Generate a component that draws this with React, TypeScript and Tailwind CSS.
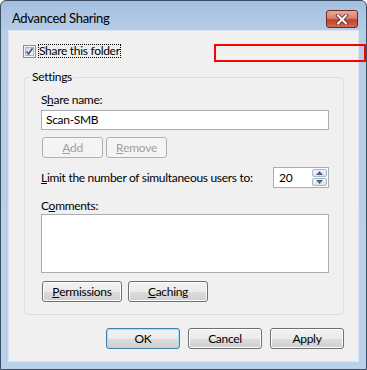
import React from "react";

function WinButton({ children, width, disabled, isDefault }: { children: React.ReactNode; width: string; disabled?: boolean; isDefault?: boolean }) {
  const base = "h-[21px] rounded-[3px] border flex items-center justify-center text-[12px] leading-none";
  if (disabled) {
    return (
      <div className={`${base} ${width} border-[#adb2b5] bg-[#f4f4f4] text-[#a0a0a0]`}>
        {children}
      </div>
    );
  }
  return (
    <div
      className={`${base} ${width} ${isDefault ? "border-[#3c7fb1] shadow-[inset_0_0_0_1px_#a8e0f6]" : "border-[#707070] shadow-[inset_0_0_0_1px_#fcfcfc]"} bg-[linear-gradient(to_bottom,#f2f2f2_0%,#ebebeb_50%,#dddddd_51%,#cfcfcf_100%)] text-black`}
    >
      {children}
    </div>
  );
}

function Checkbox() {
  return (
    <div className="w-[13px] h-[13px] border border-[#8e8f8f] bg-[#f4f4f4] p-[1px] shrink-0">
      <div className="w-full h-full border border-[#b5b5b5] bg-[linear-gradient(135deg,#d6d6d6,#f8f8f8)] relative">
        <svg className="absolute -left-[1px] -top-[1px]" width="9" height="9" viewBox="0 0 9 9">
          <path d="M1.5 4.5 L3.5 7 L7.5 1.2" fill="none" stroke="#4a5f97" strokeWidth="1.7" />
        </svg>
      </div>
    </div>
  );
}

function Spinner() {
  return (
    <div className="w-[56px] h-[21px] border border-[#abadb3] bg-white flex">
      <div className="flex-1 pl-[5px] flex items-center text-[12px]">20</div>
      <div className="w-[16px] flex flex-col gap-[1px] p-[1px] pl-0">
        <div className="flex-1 border border-[#a9b6c4] rounded-[2px] bg-[linear-gradient(to_bottom,#f3f5f8,#dde3ea)] flex items-center justify-center">
          <svg width="7" height="4" viewBox="0 0 7 4"><path d="M0 4 L3.5 0 L7 4 Z" fill="#4d6185" /></svg>
        </div>
        <div className="flex-1 border border-[#a9b6c4] rounded-[2px] bg-[linear-gradient(to_bottom,#f3f5f8,#dde3ea)] flex items-center justify-center">
          <svg width="7" height="4" viewBox="0 0 7 4"><path d="M0 0 L3.5 4 L7 0 Z" fill="#4d6185" /></svg>
        </div>
      </div>
    </div>
  );
}

export default function App() {
  return (
    <div className="relative w-[367px] h-[370px] font-['Lato',sans-serif] text-[12px] tracking-[-0.3px] text-black">
      <div className="w-[367px] h-[370px] rounded-t-[6px] border border-[#3a4d63] bg-[linear-gradient(to_bottom,#a4bfdf_0px,#b5cde8_30px,#b9d1ea_100%)] flex flex-col">
        <div className="h-[29px] flex items-start justify-between pl-[11px] pr-[8px] pt-[9px]">
          <div className="leading-[16px] text-[13px] text-black">Advanced Sharing</div>
          <div className="w-[32px] h-[18px] rounded-[3px] border border-[#6b2a1f] bg-[linear-gradient(to_bottom,#e6aa9f_0%,#d7806f_45%,#c0422c_55%,#d36a4f_100%)] flex items-center justify-center">
            <svg width="14" height="11" viewBox="0 0 14 11">
              <path d="M3 1.5 L11 9.5 M11 1.5 L3 9.5" stroke="#5a2a22" strokeWidth="3.6" strokeLinecap="square" />
              <path d="M3 1.5 L11 9.5 M11 1.5 L3 9.5" stroke="#ffffff" strokeWidth="2" strokeLinecap="square" />
            </svg>
          </div>
        </div>
        <div className="mx-[7px] mb-[7px] flex-1 bg-[#f0f0f0] border border-[#dce6f2] pt-[13px] pl-[14px]">
          <div className="h-[14px] flex items-center">
            <Checkbox />
            <div className="ml-[2px] h-[14px] px-[1px] outline outline-1 outline-dotted outline-black -outline-offset-1 flex items-center leading-none">
              Share this folder
            </div>
          </div>

          <div className="relative mt-[19px] ml-[1px] w-[320px] h-[238px] rounded-[3px] border border-[#d5dfe5] pl-[16px] pt-[14px]">
            <div className="absolute -top-[9px] left-[6px] px-[1px] bg-[#f0f0f0] leading-[16px]">Settings</div>
            <div className="h-[16px] leading-[16px]">S<span className="underline">h</span>are name:</div>
            <div className="mt-[2px] w-[288px] h-[20px] border border-[#abadb3] bg-white pl-[4px] flex items-center">Scan-SMB</div>
            <div className="mt-[7px] ml-[1px] flex gap-[3px]">
              <WinButton width="w-[61px]" disabled><span className="underline">A</span>dd</WinButton>
              <WinButton width="w-[61px]" disabled><span className="underline">R</span>emove</WinButton>
            </div>
            <div className="mt-[9px] w-[288px] flex items-center justify-between">
              <div className="leading-[16px] whitespace-nowrap"><span className="underline">L</span>imit the number of simultaneous users to:</div>
              <Spinner />
            </div>
            <div className="mt-[10px] h-[16px] leading-[16px]">C<span className="underline">o</span>mments:</div>
            <div className="w-[288px] h-[59px] border border-[#abadb3] bg-white"></div>
            <div className="mt-[8px] ml-[1px] flex gap-[6px]">
              <WinButton width="w-[80px]"><span className="underline">P</span>ermissions</WinButton>
              <WinButton width="w-[80px]"><span className="underline">C</span>aching</WinButton>
            </div>
          </div>

          <div className="mt-[13px] w-[321px] flex justify-end gap-[8px]">
            <WinButton width="w-[74px]" isDefault>OK</WinButton>
            <WinButton width="w-[74px]">Cancel</WinButton>
            <WinButton width="w-[74px]">Apply</WinButton>
          </div>
        </div>
      </div>
      <div className="absolute left-[214px] top-[44px] w-[152px] h-[18px] border-2 border-[#ff0000]"></div>
    </div>
  );
}
